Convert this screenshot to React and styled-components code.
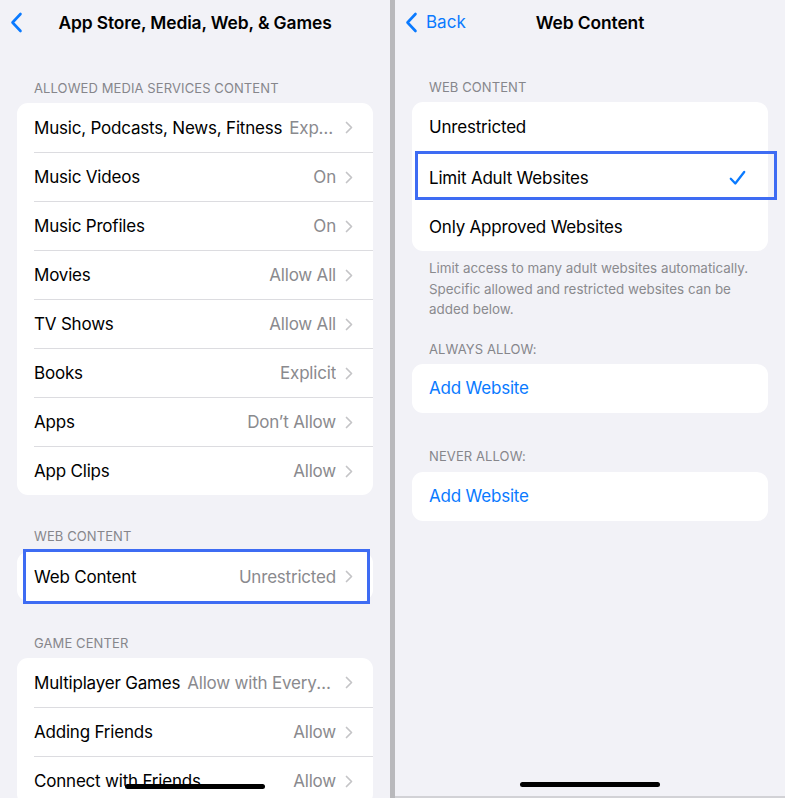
import React from 'react';
import styled, { createGlobalStyle } from 'styled-components';

const GlobalStyle = createGlobalStyle`
  html, body {
    margin: 0;
    padding: 0;
    background: #f2f2f7;
  }
  body {
    font-family: "Inter", "Noto Sans", sans-serif;
    -webkit-font-smoothing: antialiased;
  }
`;

const Screen = styled.div`
  display: flex;
  width: 785px;
  height: 798px;
  overflow: hidden;
`;

const Pane = styled.div`
  position: relative;
  flex: none;
  width: ${p => p.$width}px;
  height: 798px;
  box-sizing: border-box;
  overflow: hidden;
  background: #f2f2f7;
  border-bottom: ${p => (p.$bottomLine ? '2px solid #d2d2d6' : 'none')};
`;

const Divider = styled.div`
  flex: none;
  width: 5px;
  background: #b9b9bc;
`;

const NavBar = styled.div`
  display: grid;
  grid-template-columns: 1fr auto 1fr;
  align-items: center;
  height: 44px;
  padding: 0 10px;
`;

const NavBack = styled.div`
  display: flex;
  align-items: center;
  gap: 8px;
  color: #0a7aff;
  font-size: 17px;
`;

const NavTitle = styled.div`
  font-size: 17.4px;
  font-weight: 600;
  color: #000;
  letter-spacing: -0.1px;
`;

const Section = styled.section`
  margin: ${p => p.$top}px 17px 0;
`;

const GroupTitle = styled.div`
  padding: 0 17px 0;
  margin-bottom: ${p => p.$gap ?? 6}px;
  font-size: 13px;
  line-height: 18px;
  color: #86868b;
  text-transform: uppercase;
  letter-spacing: 0.1px;
`;

const Card = styled.div`
  background: #fff;
  border-radius: 11px;
`;

const Row = styled.div`
  position: relative;
  display: flex;
  align-items: center;
  height: ${p => p.$h ?? 49}px;
  padding: 0 20px 0 17px;
  font-size: 17px;
  letter-spacing: -0.2px;

  & + & > div:first-child {
    border-top: 1px solid #dcdce0;
  }
`;

const RowInner = styled.div`
  display: flex;
  align-items: center;
  align-self: stretch;
  flex: 1;
  min-width: 0;
  margin-right: -20px;
  padding-right: 20px;
`;

const Label = styled.span`
  flex: none;
  color: ${p => (p.$link ? '#0a7aff' : '#000')};
`;

const Value = styled.span`
  flex: 1;
  min-width: 0;
  margin-left: 7px;
  text-align: right;
  color: #8a8a8e;
  white-space: nowrap;
  overflow: hidden;
  text-overflow: ellipsis;
`;

const Chevron = styled.svg`
  flex: none;
  margin-left: 9px;
`;

const Highlight = styled.div`
  position: absolute;
  top: ${p => p.$t}px;
  bottom: ${p => p.$b}px;
  left: ${p => p.$l}px;
  right: ${p => p.$r}px;
  border: 3px solid #3e6cf3;
  pointer-events: none;
`;

const Footnote = styled.div`
  padding: 7px 17px 0;
  font-size: 13.4px;
  line-height: 20.5px;
  color: #8a8a8e;
`;

const HomeBar = styled.div`
  position: absolute;
  left: 125px;
  bottom: 9px;
  width: 140px;
  height: 5px;
  border-radius: 3px;
  background: #000;
`;

const CheckMark = styled.svg`
  margin-left: auto;
  margin-right: 2px;
`;

const BackChevron = () => (
  <svg width="13" height="21" viewBox="0 0 13 21">
    <path d="M10.5 2 L2.5 10.5 L10.5 19" fill="none" stroke="#0a7aff" strokeWidth="2.6" strokeLinecap="round" strokeLinejoin="round" />
  </svg>
);

const Disclosure = () => (
  <Chevron width="8" height="13" viewBox="0 0 8 13">
    <path d="M1.5 1.5 L6.5 6.5 L1.5 11.5" fill="none" stroke="#c4c4c7" strokeWidth="1.7" strokeLinecap="round" strokeLinejoin="round" />
  </Chevron>
);

const Check = () => (
  <CheckMark width="17" height="16" viewBox="0 0 17 16">
    <path d="M1.8 8.8 L6.3 13.5 L15.2 2" fill="none" stroke="#0a7aff" strokeWidth="2.3" strokeLinecap="round" strokeLinejoin="round" />
  </CheckMark>
);

const SettingRow = ({ label, value, highlight }) => (
  <Row>
    <RowInner>
      <Label>{label}</Label>
      <Value>{value}</Value>
      <Disclosure />
    </RowInner>
    {highlight && <Highlight {...highlight} />}
  </Row>
);

const media = [
  ['Music, Podcasts, News, Fitness', 'Explicit'],
  ['Music Videos', 'On'],
  ['Music Profiles', 'On'],
  ['Movies', 'Allow All'],
  ['TV Shows', 'Allow All'],
  ['Books', 'Explicit'],
  ['Apps', 'Don\u2019t Allow'],
  ['App Clips', 'Allow'],
];

const games = [
  ['Multiplayer Games', 'Allow with Everyone'],
  ['Adding Friends', 'Allow'],
  ['Connect with Friends', 'Allow'],
];

const App = () => (
  <Screen>
    <GlobalStyle />
    <Pane $width={390}>
      <NavBar>
        <NavBack><BackChevron /></NavBack>
        <NavTitle>App Store, Media, Web, &amp; Games</NavTitle>
        <div />
      </NavBar>

      <Section $top={35}>
        <GroupTitle>Allowed Media Services Content</GroupTitle>
        <Card>
          {media.map(([l, v]) => <SettingRow key={l} label={l} value={v} />)}
        </Card>
      </Section>

      <Section $top={32}>
        <GroupTitle $gap={7}>Web Content</GroupTitle>
        <Card>
          <SettingRow label="Web Content" value="Unrestricted" highlight={{ $t: -3, $b: -3, $l: 6, $r: 3 }} />
        </Card>
      </Section>

      <Section $top={33}>
        <GroupTitle>Game Center</GroupTitle>
        <Card>
          {games.map(([l, v]) => <SettingRow key={l} label={l} value={v} />)}
        </Card>
      </Section>

      <HomeBar />
    </Pane>

    <Divider />

    <Pane $width={390} $bottomLine>
      <NavBar>
        <NavBack><BackChevron />Back</NavBack>
        <NavTitle>Web Content</NavTitle>
        <div />
      </NavBar>

      <Section $top={34}>
        <GroupTitle>Web Content</GroupTitle>
        <Card>
          <Row $h={50}><RowInner><Label>Unrestricted</Label></RowInner></Row>
          <Row $h={50}>
            <RowInner><Label>Limit Adult Websites</Label><Check /></RowInner>
            <Highlight $t={-1} $b={2} $l={3} $r={-9} />
          </Row>
          <Row $h={49}><RowInner><Label>Only Approved Websites</Label></RowInner></Row>
        </Card>
        <Footnote>
          Limit access to many adult websites automatically. Specific allowed and restricted websites can be added below.
        </Footnote>
      </Section>

      <Section $top={20}>
        <GroupTitle>Always Allow:</GroupTitle>
        <Card>
          <Row><Label $link>Add Website</Label></Row>
        </Card>
      </Section>

      <Section $top={34}>
        <GroupTitle $gap={7}>Never Allow:</GroupTitle>
        <Card>
          <Row><Label $link>Add Website</Label></Row>
        </Card>
      </Section>

      <HomeBar />
    </Pane>
  </Screen>
);

export default App;
